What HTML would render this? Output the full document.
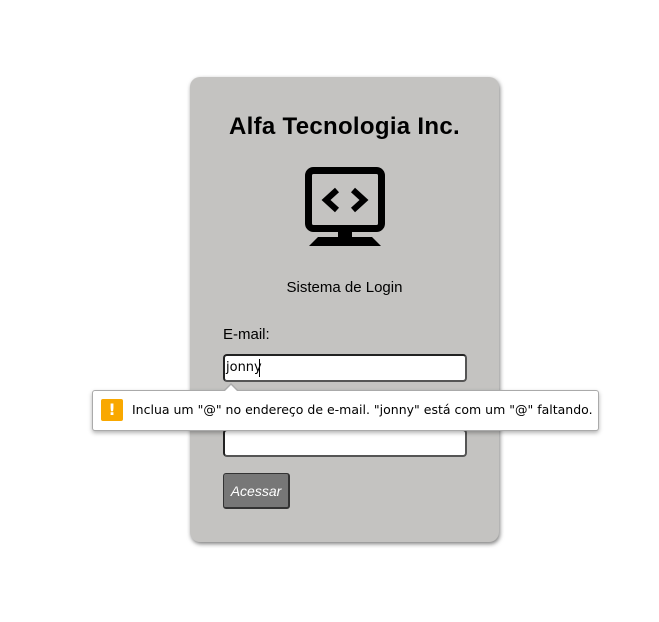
<!DOCTYPE html>
<html><head><meta charset="utf-8"><style>
body{margin:0;width:659px;height:622px;background:#fff;position:relative;font-family:"Comic Sans MS","Liberation Sans",sans-serif;overflow:hidden}
.card{position:absolute;left:190px;top:77px;width:309px;height:465px;background:#c4c3c1;border-radius:10px;box-shadow:1px 2px 4px rgba(0,0,0,.5)}
.t{position:absolute;left:0;width:100%;text-align:center}
.inp{position:absolute;left:223px;width:240px;height:24px;background:#fff;border:2px solid #555;border-top-color:#222;border-left-color:#222;border-radius:4px}
.btn{position:absolute;left:223px;top:473px;width:64px;height:33px;background:#777;border:1px solid #333;border-right-width:2px;border-bottom-width:2px;border-radius:3px;color:#fff;font-size:14px;font-style:italic;text-align:center;line-height:34px}
.tip{position:absolute;left:92px;top:390px;width:505px;height:39px;background:#fff;border:1px solid #aaa;border-radius:3px;box-shadow:0 2px 4px rgba(0,0,0,.3);font-family:"DejaVu Sans","Liberation Sans",sans-serif;font-size:12.5px}
</style></head><body>
<div class="card"></div>
<div class="t" style="left:190px;width:309px;top:113px;font-size:24px;font-weight:bold;letter-spacing:0.3px">Alfa Tecnologia Inc.</div>
<svg style="position:absolute;left:305px;top:167px" width="80" height="80" viewBox="0 0 80 80">
<rect x="3.5" y="3.5" width="73" height="58" rx="5" fill="none" stroke="#000" stroke-width="7"/>
<rect x="33" y="62" width="14" height="9" fill="#000"/>
<polygon points="4,79 76,79 67,70 13,70" fill="#000"/>
<polyline points="32,23 21,33 32,43" fill="none" stroke="#000" stroke-width="6"/>
<polyline points="48,23 59,33 48,43" fill="none" stroke="#000" stroke-width="6"/>
</svg>
<div class="t" style="left:190px;width:309px;top:279px;font-size:15px">Sistema de Login</div>
<div style="position:absolute;left:223px;top:326px;font-size:15px">E-mail:</div>
<div class="inp" style="top:354px"><span style="position:absolute;left:1px;top:4px;font-family:'DejaVu Sans',sans-serif;font-size:13px">jonny</span><span style="position:absolute;left:34px;top:3px;width:1px;height:18px;background:#000"></span></div>
<div class="inp" style="top:429px"></div>
<div class="btn">Acessar</div>
<div class="tip">
<div style="position:absolute;left:8px;top:8px;width:22px;height:22px;background:#f9a800;border-radius:2px;color:#fff;font-weight:bold;text-align:center;line-height:22px;font-size:16px">!</div>
<div style="position:absolute;left:39px;top:11px;white-space:nowrap">Inclua um "@" no endereço de e-mail. "jonny" está com um "@" faltando.</div>
</div>
<div style="position:absolute;left:223px;top:383px;width:0;height:0;border-left:8px solid transparent;border-right:8px solid transparent;border-bottom:8px solid #aaa"></div>
<div style="position:absolute;left:224px;top:385px;width:0;height:0;border-left:7px solid transparent;border-right:7px solid transparent;border-bottom:7px solid #fff"></div>
</body></html>
